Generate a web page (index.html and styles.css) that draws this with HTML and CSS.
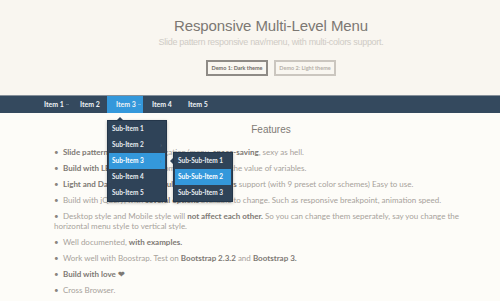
FILE: index.html
```html
<!DOCTYPE html>
<html lang="en">
<head>
    <meta charset="UTF-8">
    <meta name="viewport" content="width=device-width, initial-scale=1.0">
    <title>Responsive Multi-Level Menu</title>
    <link rel="stylesheet" href="styles.css">
</head>
<body>

    <div class="header">
        <div class="wrap">
            <h1>Responsive Multi-Level Menu</h1>
            <p class="tagline">Slide pattern responsive nav/menu, with multi-colors support.</p>
            <div class="demos">
                <a class="demo-btn dark" href="#">Demo 1: Dark theme</a>
                <a class="demo-btn light" href="#">Demo 2: Light theme</a>
            </div>
        </div>
    </div>

    <nav class="menu">
        <ul class="menu-top">
            <li class="has-sub"><a href="#">Item 1</a><span class="caret"></span></li>
            <li><a href="#">Item 2</a></li>
            <li class="has-sub active">
                <a href="#">Item 3</a><span class="caret"></span>
                <ul class="sub">
                    <li><a href="#">Sub-Item 1</a></li>
                    <li><a href="#">Sub-Item 2</a><span class="more">›</span></li>
                    <li class="active">
                        <a href="#">Sub-Item 3</a><span class="more">›</span>
                        <ul class="sub sub-sub">
                            <li><a href="#">Sub-Sub-Item 1</a></li>
                            <li class="active"><a href="#">Sub-Sub-Item 2</a></li>
                            <li><a href="#">Sub-Sub-Item 3</a></li>
                        </ul>
                    </li>
                    <li><a href="#">Sub-Item 4</a></li>
                    <li><a href="#">Sub-Item 5</a></li>
                </ul>
            </li>
            <li><a href="#">Item 4</a></li>
            <li><a href="#">Item 5</a></li>
        </ul>
    </nav>

    <div class="wrap content">
        <h2>Features</h2>
        <ul class="features">
            <li><strong>Slide pattern</strong> responsive navigation/menu, <strong>space-saving</strong>, sexy as hell.</li>
            <li><strong>Build with LESS</strong>, easy to customize by changing the value of variables.</li>
            <li><strong>Light and Dark theme</strong>, plus <strong>multiple flat UI colors</strong> support (with 9 preset color schemes) Easy to use.</li>
            <li>Build with jQuery, with <strong>several options</strong> available to change. Such as responsive breakpoint, animation speed.</li>
            <li>Desktop style and Mobile style will <strong>not affect each other.</strong> So you can change them seperately, say you change the horizontal menu style to vertical style.</li>
            <li>Well documented, <strong>with examples.</strong></li>
            <li>Work well with Boostrap. Test on <strong>Bootstrap 2.3.2</strong> and <strong>Bootstrap 3.</strong></li>
            <li><strong>Build with love &#10084;</strong></li>
            <li>Cross Browser.</li>
        </ul>
    </div>

</body>
</html>
```

FILE: styles.css
```css
body {
    margin: 0;
    background-color: #fdfcf8;
    font-family: Lato, "Open Sans", sans-serif;
    color: #a7a29b;
}

a {
    text-decoration: none;
}

.wrap {
    padding-left: 42px;
}

/* header */

.header {
    background-color: #f9f6f0;
    padding: 17px 0 19px;
    text-align: center;
}

.header h1 {
    margin: 0;
    font-family: "Liberation Sans", Arial, sans-serif;
    font-weight: normal;
    font-size: 15px;
    line-height: 18px;
    color: #7c7873;
    letter-spacing: -0.1px;
}

.tagline {
    margin: 1px 0 0;
    font-family: "Liberation Sans", Arial, sans-serif;
    font-size: 9px;
    line-height: 12px;
    color: #cfcbc5;
    letter-spacing: -0.3px;
}

.demos {
    margin-top: 12px;
    display: flex;
    justify-content: center;
    gap: 6px;
}

.demo-btn {
    display: block;
    box-sizing: border-box;
    width: 62px;
    height: 16px;
    line-height: 12px;
    font-size: 5.5px;
    font-weight: bold;
}

.demo-btn.dark {
    border: 2px solid #8f8b86;
    color: #6f6b66;
}

.demo-btn.light {
    border: 2px solid #cbc6bf;
    color: #b5b0a9;
}

/* nav */

.menu {
    background-color: #34495e;
    border-top: 1px solid #86909a;
    height: 17px;
}

.menu ul {
    list-style: none;
    margin: 0;
    padding: 0;
}

.menu .menu-top {
    display: flex;
    padding-left: 35px;
}

.menu-top > li {
    position: relative;
    width: 36px;
    height: 17px;
}

.menu-top > li > a {
    display: block;
    padding-left: 9px;
    line-height: 17px;
    font-size: 7px;
    font-weight: bold;
    color: #eef2f5;
}

.menu-top > li.active {
    background-color: #3498db;
}

.caret {
    position: absolute;
    left: 31px;
    top: 8px;
    width: 3px;
    height: 1px;
    background-color: #62778b;
}

.menu-top > li.active .caret {
    background-color: #6fb4e6;
}

.sub {
    position: absolute;
    left: 0;
    top: 24px;
    width: 58px;
    background-color: #2f4358;
    border: 1px solid #24364a;
    box-shadow: 0 1px 3px rgba(0, 0, 0, 0.25);
}

.sub::before {
    content: "";
    position: absolute;
    left: 9px;
    top: -4px;
    border-left: 3px solid transparent;
    border-right: 3px solid transparent;
    border-bottom: 3px solid #2f4358;
}

.sub li {
    position: relative;
    height: 16px;
}

.sub li a {
    display: block;
    margin: 0 1px;
    padding-left: 3px;
    line-height: 16px;
    font-size: 6.5px;
    font-weight: bold;
    color: #e9eef2;
}

.sub li.active > a {
    background-color: #3498db;
    color: #fff;
}

.more {
    position: absolute;
    right: 4px;
    top: 0;
    line-height: 16px;
    font-size: 6px;
    color: #5f7488;
}

.sub-sub {
    left: 65px;
    top: -1px;
}

.sub-sub::before {
    left: -4px;
    top: 5px;
    border-top: 3px solid transparent;
    border-bottom: 3px solid transparent;
    border-left: none;
    border-right: 3px solid #2f4358;
}

/* content */

.content h2 {
    margin: 10px 0 0;
    font-family: "Liberation Sans", Arial, sans-serif;
    font-weight: normal;
    font-size: 10px;
    line-height: 14px;
    text-align: center;
    color: #7f7b76;
}

.features {
    list-style: none;
    margin: 10px 0 0;
    padding: 0 22px 0 12px;
    font-size: 8px;
    line-height: 10px;
}

.features li {
    margin-bottom: 6px;
}

.features li::before {
    content: "•";
    display: inline-block;
    width: 9px;
    color: #8a857f;
}

.features strong {
    color: #7d7974;
}
```
